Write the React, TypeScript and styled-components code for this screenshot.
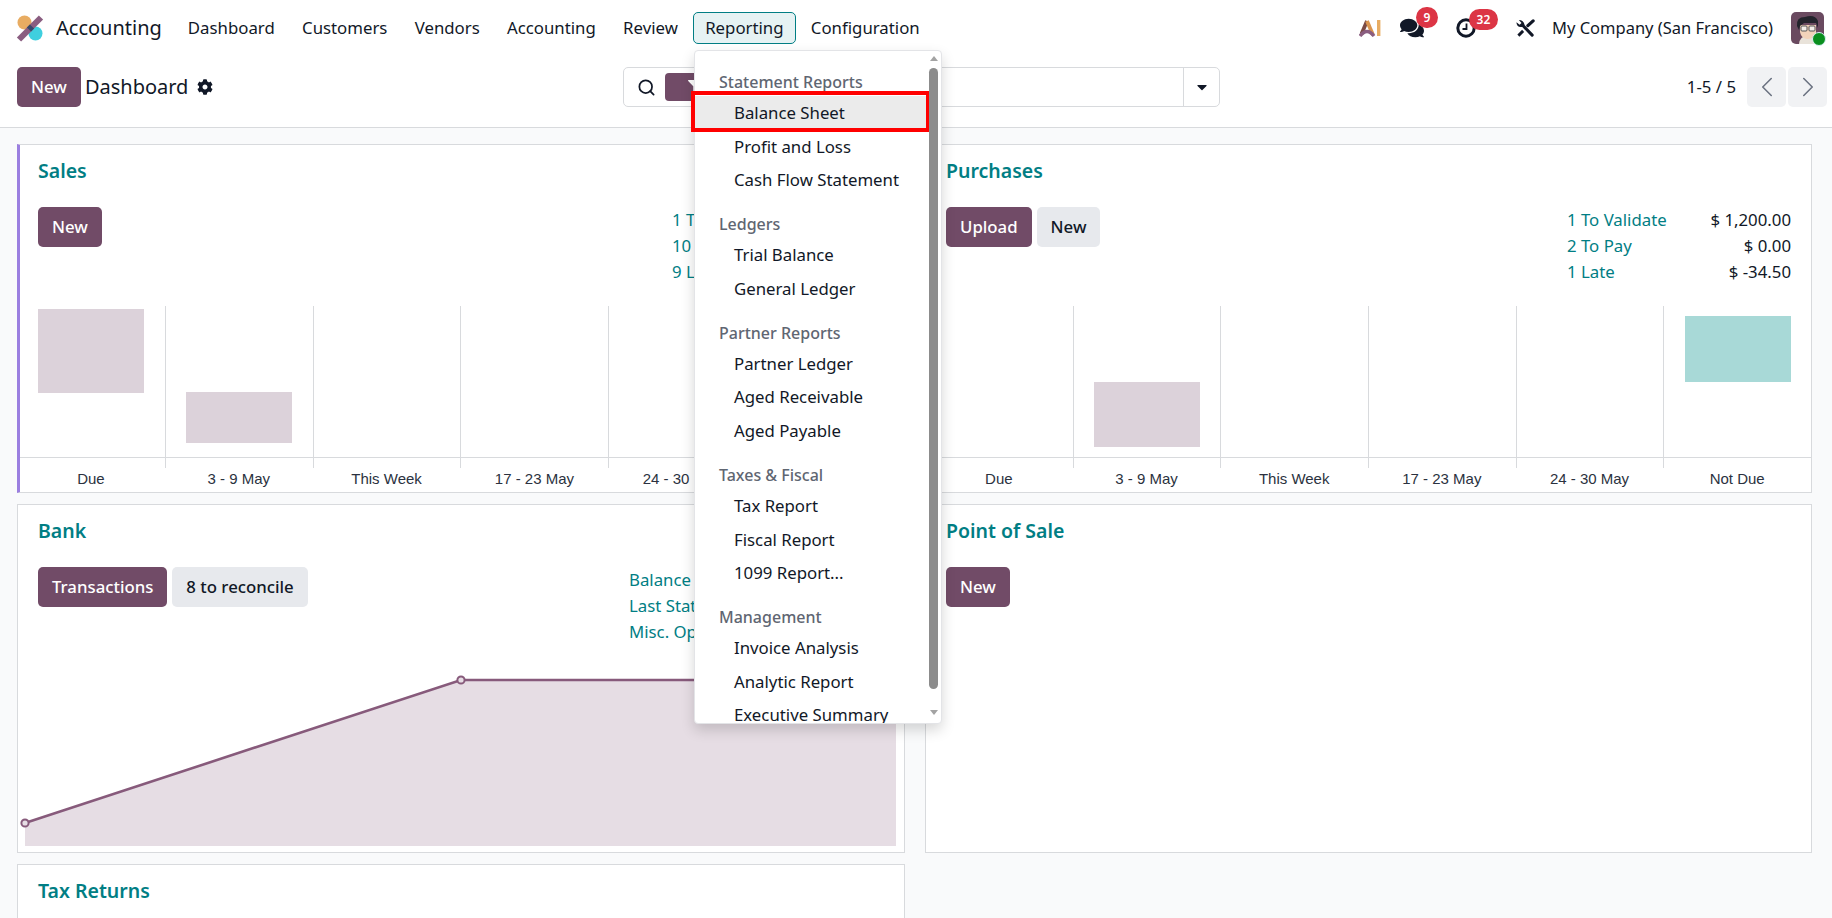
import { ChevronLeft, ChevronRight, Search } from "lucide-react"
import { FaCaretDown, FaCog, FaComments, FaFilter } from "react-icons/fa"
import styled, { createGlobalStyle } from "styled-components"

const PRIMARY = "#714b67"
const TEAL = "#017e84"
const INK = "#111827"
const LINE = "#d8dadd"

const GlobalStyle = createGlobalStyle`
  html, body {
    margin: 0;
    background: #f9fafb;
    color: ${INK};
    font-family: "Noto Sans", "Open Sans", sans-serif;
    font-size: 16.8px;
  }
  * {
    box-sizing: border-box;
  }
`

const Page = styled.div`
  height: 100vh;
  overflow: hidden;
  position: relative;
`

const TopBar = styled.header`
  display: flex;
  align-items: center;
  height: 56px;
  background: #fff;
  padding: 0 8px 0 16px;
`

const AppName = styled.span`
  font-size: 20px;
  margin: 0 14px 2px 12px;
  white-space: nowrap;
`

const NavMenu = styled.nav`
  display: flex;
  align-items: center;
  gap: 3.3px;
`

const NavItem = styled.button<{ $active?: boolean }>`
  background: ${({ $active }) => ($active ? "#e6f2f3" : "transparent")};
  border: 1px solid ${({ $active }) => ($active ? TEAL : "transparent")};
  border-radius: 5px;
  color: ${INK};
  font: inherit;
  height: 32px;
  padding: 0 11px 2px;
  white-space: nowrap;
`

const Systray = styled.div`
  display: flex;
  align-items: center;
  margin-left: auto;
`

const TrayIcon = styled.span<{ $width: number; $gap: number }>`
  display: flex;
  align-items: center;
  justify-content: center;
  position: relative;
  width: ${({ $width }) => $width}px;
  margin-right: ${({ $gap }) => $gap}px;
  font-size: 20px;
`

const Badge = styled.span<{ $left: number; $width: number }>`
  position: absolute;
  top: -9px;
  left: ${({ $left }) => $left}px;
  width: ${({ $width }) => $width}px;
  height: 21px;
  border-radius: 11px;
  background: #dc3545;
  color: #fff;
  font-size: 12px;
  font-weight: 600;
  line-height: 21px;
  text-align: center;
`

const CompanyName = styled.span`
  font-size: 16.5px;
  margin: 0 18px 2px 0;
  white-space: nowrap;
`

const AvatarBox = styled.span`
  display: block;
  position: relative;
  width: 33px;
  height: 32px;
`

const StatusDot = styled.span`
  position: absolute;
  right: -2px;
  bottom: -2px;
  width: 14px;
  height: 14px;
  border-radius: 50%;
  background: #0a8f1f;
  border: 1px solid #d7f0f5;
`

const ControlPanel = styled.div`
  display: grid;
  grid-template-columns: 606px 597px 1fr;
  align-items: center;
  height: 72px;
  padding: 11px 5px 20px 17px;
  background: #fff;
  border-bottom: 1px solid ${LINE};
`

const TitleGroup = styled.div`
  display: flex;
  align-items: center;
`

const PageTitle = styled.span`
  font-size: 20px;
  margin: 0 9px 2px 4px;
`

const Button = styled.button<{ $secondary?: boolean }>`
  background: ${({ $secondary }) => ($secondary ? "#e7e9ed" : PRIMARY)};
  border: 0;
  border-radius: 5px;
  color: ${({ $secondary }) => ($secondary ? INK : "#fff")};
  font: inherit;
  font-weight: 500;
  height: 40px;
  padding: 0 14px 2px;
  white-space: nowrap;
`

const SearchBar = styled.div`
  display: flex;
  align-items: center;
  height: 40px;
  background: #fff;
  border: 1px solid ${LINE};
  border-radius: 5px;
  padding-left: 13px;
`

const FilterChip = styled.span`
  display: flex;
  align-items: center;
  justify-content: center;
  width: 60px;
  height: 28px;
  margin-left: 9px;
  border-radius: 4px;
  background: ${PRIMARY};
  color: #fff;
  font-size: 14px;
`

const SearchToggle = styled.span`
  display: flex;
  align-items: center;
  justify-content: center;
  width: 36px;
  height: 100%;
  margin-left: auto;
  border-left: 1px solid ${LINE};
  font-size: 16px;
`

const Pager = styled.div`
  display: flex;
  align-items: center;
  justify-content: flex-end;
  gap: 2px;
`

const PagerValue = styled.span`
  margin: 0 9px 2px 0;
`

const PagerButton = styled.span`
  display: flex;
  align-items: center;
  justify-content: center;
  width: 39px;
  height: 40px;
  border-radius: 5px;
  background: #f1f2f4;
  color: #6b7280;
`

const Board = styled.main`
  display: grid;
  grid-template-columns: 888px 887px;
  grid-auto-rows: 349px;
  column-gap: 20px;
  row-gap: 11px;
  padding: 16px 0 0 17px;
`

const Card = styled.section<{ $accent?: boolean }>`
  background: #fff;
  border: 1px solid ${LINE};
  border-left: ${({ $accent }) => ($accent ? "3px solid #9b7fe0" : `1px solid ${LINE}`)};
  display: flex;
  flex-direction: column;
  overflow: hidden;
`

const CardTitle = styled.h2<{ $accent?: boolean }>`
  color: ${TEAL};
  font-size: 19.5px;
  font-weight: 600;
  line-height: 28px;
  margin: 12px 0 22px ${({ $accent }) => ($accent ? 18 : 20)}px;
`

const CardHead = styled.div<{ $accent?: boolean }>`
  display: flex;
  align-items: flex-start;
  justify-content: space-between;
  height: 78px;
  padding: 0 20px 0 ${({ $accent }) => ($accent ? 18 : 20)}px;
`

const Actions = styled.div`
  display: flex;
  gap: 5px;
`

const Stats = styled.div<{ $width: number }>`
  width: ${({ $width }) => $width}px;
`

const StatRow = styled.div`
  display: flex;
  justify-content: space-between;
  line-height: 26px;
`

const StatLabel = styled.span`
  color: ${TEAL};
  white-space: nowrap;
`

const ChartRow = styled.div<{ $accent?: boolean }>`
  display: grid;
  grid-template-columns: repeat(6, 1fr);
  margin: 21px 0 0 ${({ $accent }) => ($accent ? -3 : -1)}px;
`

const ChartColumn = styled.div``

const Plot = styled.div<{ $first?: boolean }>`
  height: 152px;
  border-bottom: 1px solid ${LINE};
  border-left: ${({ $first }) => ($first ? "0" : `1px solid ${LINE}`)};
  overflow: hidden;
`

const Bar = styled.div<{ $top: number; $height: number; $color: string }>`
  width: 106px;
  height: ${({ $height }) => $height}px;
  margin: ${({ $top }) => $top}px auto 0;
  background: ${({ $color }) => $color};
`

const Tick = styled.div<{ $first?: boolean }>`
  height: 10px;
  border-left: ${({ $first }) => ($first ? "0" : `1px solid ${LINE}`)};
`

const ChartLabel = styled.div`
  color: #2b3240;
  font-family: "Liberation Sans", Arial, sans-serif;
  font-size: 15px;
  line-height: 22px;
  text-align: center;
  white-space: nowrap;
`

const LineChart = styled.svg`
  display: block;
  margin-top: 25px;
`

const Menu = styled.div`
  position: absolute;
  top: 50px;
  left: 694px;
  display: flex;
  width: 248px;
  height: 674px;
  background: #fff;
  border: 1px solid #e3e4e7;
  border-radius: 4px;
  box-shadow: 0 6px 14px rgba(0, 0, 0, 0.16);
`

const MenuScroll = styled.div`
  flex: 1;
  padding-top: 17px;
  clip-path: inset(0 -10px 0 -10px);
`

const MenuGroup = styled.div`
  margin-top: 13.4px;

  &:first-child {
    margin-top: 0;
  }
`

const MenuHeader = styled.div`
  color: #5f6672;
  font-size: 16px;
  font-weight: 500;
  height: 28px;
  line-height: 28px;
  padding-left: 24px;
`

const MenuItem = styled.div<{ $marked?: boolean }>`
  background: ${({ $marked }) => ($marked ? "#ebebeb" : "transparent")};
  height: 33.6px;
  line-height: 33.6px;
  padding-left: 39px;
  position: relative;
  white-space: nowrap;

  ${({ $marked }) =>
    $marked &&
    `&::after {
      content: "";
      position: absolute;
      inset: -5px -2px -2px -4px;
      border: 4px solid #f00;
    }`}
`

const ScrollTrack = styled.div`
  display: flex;
  flex-direction: column;
  align-items: center;
  width: 11px;
  margin-right: 2px;
  position: relative;
`

const ScrollArrow = styled.span<{ $down?: boolean }>`
  width: 0;
  height: 0;
  margin: ${({ $down }) => ($down ? "21px 0 0" : "5px 0 0")};
  border-left: 4px solid transparent;
  border-right: 4px solid transparent;
  ${({ $down }) => ($down ? "border-top: 5px solid #a3a3a3;" : "border-bottom: 5px solid #a3a3a3;")}
`

const ScrollThumb = styled.span`
  width: 9px;
  height: 621px;
  margin-top: 7px;
  border-radius: 5px;
  background: #8c8c8c;
`

type Bars = { col: number; top: number; height: number; color: string }

const labels = ["Due", "3 - 9 May", "This Week", "17 - 23 May", "24 - 30 May", "Not Due"]

const menu = [
  { title: "Statement Reports", items: ["Balance Sheet", "Profit and Loss", "Cash Flow Statement"] },
  { title: "Ledgers", items: ["Trial Balance", "General Ledger"] },
  { title: "Partner Reports", items: ["Partner Ledger", "Aged Receivable", "Aged Payable"] },
  { title: "Taxes & Fiscal", items: ["Tax Report", "Fiscal Report", "1099 Report..."] },
  { title: "Management", items: ["Invoice Analysis", "Analytic Report", "Executive Summary"] },
]

function Logo() {
  return (
    <svg width="28" height="28" viewBox="0 0 28 28">
      <circle cx="8.5" cy="8.5" r="7" fill="#e8ac62" />
      <circle cx="19.5" cy="19.5" r="7" fill="#3fcfdf" />
      <path d="M3 25.5 L25 3.5" stroke="#8a5d80" strokeWidth="6" />
      <path d="M13 15.5 L16 12.5" stroke="#36486b" strokeWidth="6" />
    </svg>
  )
}

function AiMark() {
  return (
    <svg width="22" height="18" viewBox="0 0 22 18">
      <path d="M2.5 15 L8 2" fill="none" stroke="#7a4a45" strokeWidth="3.8" />
      <path d="M8 2 L14 16" fill="none" stroke="#d9944f" strokeWidth="3.8" />
      <path d="M1 17 Q8 8 15 17" fill="none" stroke="#8a5d80" strokeWidth="3.4" />
      <rect x="18" y="1" width="3.4" height="16" fill="#e8ac62" />
    </svg>
  )
}

function ClockIcon() {
  return (
    <svg width="20" height="20" viewBox="0 0 20 20">
      <circle cx="10" cy="10" r="8.2" fill="none" stroke={INK} strokeWidth="3" />
      <path d="M10.5 5.5 V11 H6.5" fill="none" stroke={INK} strokeWidth="1.8" />
    </svg>
  )
}

function ToolsIcon() {
  return (
    <svg width="20" height="19" viewBox="0 0 20 19">
      <path d="M7 6 L17 16.5" stroke={INK} strokeWidth="3.2" strokeLinecap="round" />
      <path d="M0.5 3 Q0.5 8.5 6 8 L9 5.5 Q8 0.5 3 0.5 L5.8 3.6 L3.8 5.6 Z" fill={INK} />
      <path d="M2.5 17 L7.5 12" stroke={INK} strokeWidth="3" />
      <path d="M12.5 6.5 L18 1.5" stroke={INK} strokeWidth="3.4" strokeLinecap="round" />
    </svg>
  )
}

function Avatar() {
  return (
    <svg width="33" height="32" viewBox="0 0 33 32">
      <rect width="33" height="32" rx="5" fill="#6a4a60" />
      <path d="M8 32 Q9 24 16 24 Q24 24 26 32 Z" fill="#e9e3da" />
      <path d="M9 13 L25 13 L25 22 Q22 27 16 27 Q10 26 9 20 Z" fill="#f2d3ba" />
      <path d="M6 14 Q5 5 14 5 Q24 2 27 9 L27 16 L25 11 L13 11 L9 14 L8 18 Z" fill="#23242c" />
      <rect x="10" y="14" width="6" height="5" rx="1" fill="#f4efe9" stroke="#555" />
      <rect x="18" y="14" width="6" height="5" rx="1" fill="#f4efe9" stroke="#555" />
    </svg>
  )
}

function BarChart({ bars, accent }: { bars: Bars[]; accent?: boolean }) {
  return (
    <ChartRow $accent={accent}>
      {labels.map((label, i) => {
        const bar = bars.find(b => b.col === i)
        return (
          <ChartColumn key={label}>
            <Plot $first={i === 0}>
              {bar && <Bar $top={bar.top} $height={bar.height} $color={bar.color} />}
            </Plot>
            <Tick $first={i === 0} />
            <ChartLabel>{label}</ChartLabel>
          </ChartColumn>
        )
      })}
    </ChartRow>
  )
}

export default function App() {
  return (
    <Page>
      <GlobalStyle />

      <TopBar>
        <Logo />
        <AppName>Accounting</AppName>
        <NavMenu>
          <NavItem>Dashboard</NavItem>
          <NavItem>Customers</NavItem>
          <NavItem>Vendors</NavItem>
          <NavItem>Accounting</NavItem>
          <NavItem>Review</NavItem>
          <NavItem $active>Reporting</NavItem>
          <NavItem>Configuration</NavItem>
        </NavMenu>
        <Systray>
          <TrayIcon $width={22} $gap={19}>
            <AiMark />
          </TrayIcon>
          <TrayIcon $width={24} $gap={32}>
            <FaComments size={24} />
            <Badge $left={16} $width={22}>9</Badge>
          </TrayIcon>
          <TrayIcon $width={20} $gap={40}>
            <ClockIcon />
            <Badge $left={13} $width={29}>32</Badge>
          </TrayIcon>
          <TrayIcon $width={19} $gap={17}>
            <ToolsIcon />
          </TrayIcon>
          <CompanyName>My Company (San Francisco)</CompanyName>
          <AvatarBox>
            <Avatar />
            <StatusDot />
          </AvatarBox>
        </Systray>
      </TopBar>

      <ControlPanel>
        <TitleGroup>
          <Button>New</Button>
          <PageTitle>Dashboard</PageTitle>
          <FaCog size={16} />
        </TitleGroup>
        <SearchBar>
          <Search size={19} strokeWidth={2.2} />
          <FilterChip>
            <FaFilter />
          </FilterChip>
          <SearchToggle>
            <FaCaretDown />
          </SearchToggle>
        </SearchBar>
        <Pager>
          <PagerValue>1-5 / 5</PagerValue>
          <PagerButton>
            <ChevronLeft size={34} strokeWidth={1.1} />
          </PagerButton>
          <PagerButton>
            <ChevronRight size={34} strokeWidth={1.1} />
          </PagerButton>
        </Pager>
      </ControlPanel>

      <Board>
        <Card $accent>
          <CardTitle $accent>Sales</CardTitle>
          <CardHead $accent>
            <Actions>
              <Button>New</Button>
            </Actions>
            <Stats $width={212}>
              <StatRow><StatLabel>1 To Validate</StatLabel></StatRow>
              <StatRow><StatLabel>10 To Pay</StatLabel></StatRow>
              <StatRow><StatLabel>9 Late</StatLabel></StatRow>
            </Stats>
          </CardHead>
          <BarChart
            accent
            bars={[
              { col: 0, top: 3, height: 84, color: "#dcd2da" },
              { col: 1, top: 86, height: 51, color: "#dcd2da" },
            ]}
          />
        </Card>
        <Card>
          <CardTitle>Purchases</CardTitle>
          <CardHead>
            <Actions>
              <Button>Upload</Button>
              <Button $secondary>New</Button>
            </Actions>
            <Stats $width={224}>
              <StatRow><StatLabel>1 To Validate</StatLabel><span>$ 1,200.00</span></StatRow>
              <StatRow><StatLabel>2 To Pay</StatLabel><span>$ 0.00</span></StatRow>
              <StatRow><StatLabel>1 Late</StatLabel><span>$ -34.50</span></StatRow>
            </Stats>
          </CardHead>
          <BarChart
            bars={[
              { col: 1, top: 76, height: 65, color: "#dcd2da" },
              { col: 5, top: 10, height: 66, color: "#a8d9d7" },
            ]}
          />
        </Card>
        <Card>
          <CardTitle>Bank</CardTitle>
          <CardHead>
            <Actions>
              <Button>Transactions</Button>
              <Button $secondary>8 to reconcile</Button>
            </Actions>
            <Stats $width={255}>
              <StatRow><StatLabel>Balance</StatLabel></StatRow>
              <StatRow><StatLabel>Last Statement</StatLabel></StatRow>
              <StatRow><StatLabel>Misc. Operations</StatLabel></StatRow>
            </Stats>
          </CardHead>
          <LineChart width="886" height="180" viewBox="0 0 886 180">
            <path d="M7 153 L443 10 L878 10 L878 176 L7 176 Z" fill="#e6dde4" />
            <path d="M7 153 L443 10 L878 10" fill="none" stroke="#875a7b" strokeWidth="2.6" />
            <circle cx="7" cy="153" r="3.6" fill="#e6dde4" stroke="#875a7b" strokeWidth="2" />
            <circle cx="443" cy="10" r="3.6" fill="#e6dde4" stroke="#875a7b" strokeWidth="2" />
          </LineChart>
        </Card>
        <Card>
          <CardTitle>Point of Sale</CardTitle>
          <CardHead>
            <Actions>
              <Button>New</Button>
            </Actions>
          </CardHead>
        </Card>
        <Card>
          <CardTitle>Tax Returns</CardTitle>
        </Card>
      </Board>

      <Menu>
        <MenuScroll>
          {menu.map(group => (
            <MenuGroup key={group.title}>
              <MenuHeader>{group.title}</MenuHeader>
              {group.items.map(item => (
                <MenuItem key={item} $marked={item === "Balance Sheet"}>
                  {item}
                </MenuItem>
              ))}
            </MenuGroup>
          ))}
        </MenuScroll>
        <ScrollTrack>
          <ScrollArrow />
          <ScrollThumb />
          <ScrollArrow $down />
        </ScrollTrack>
      </Menu>
    </Page>
  )
}
